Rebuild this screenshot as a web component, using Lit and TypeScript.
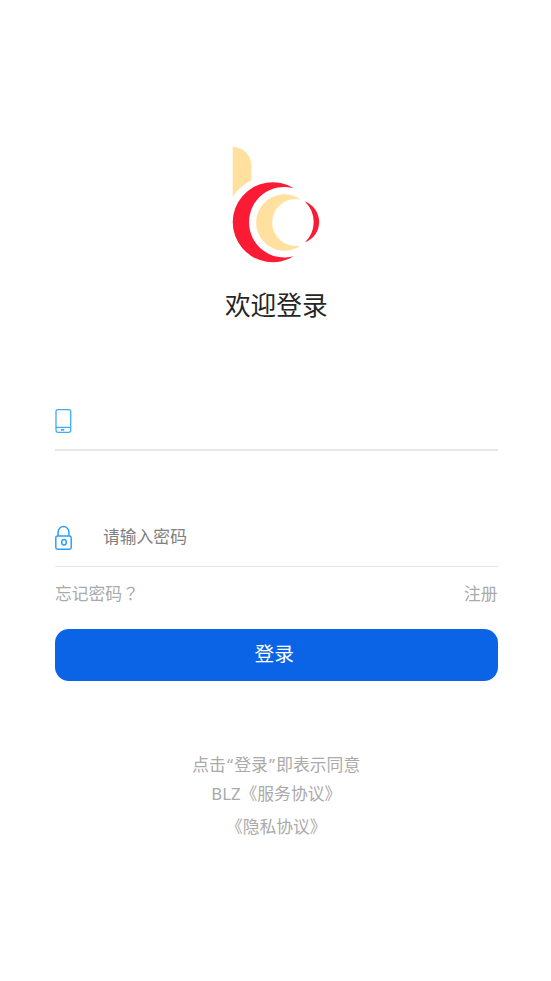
import { LitElement, html, css } from "lit";
import { customElement } from "lit/decorators.js";

@customElement("app-root")
export class AppRoot extends LitElement {
  static styles = css`
    :host {
      display: block;
      box-sizing: border-box;
      width: 100%;
      height: 981px;
      padding: 147px 53.5px 0 55px;
      overflow: hidden;
      background: #fff;
      color: #aaa;
      font: 16.8px/24px "Noto Sans", "Noto Sans CJK SC", sans-serif;
    }
    svg {
      display: block;
      flex: none;
    }
    .logo {
      margin: 0 auto;
    }
    h1 {
      margin: 23px 0 0;
      font-size: 25.7px;
      font-weight: 400;
      line-height: 40px;
      text-align: center;
      color: #262626;
    }
    .field {
      display: flex;
      align-items: center;
      box-sizing: border-box;
      height: 60px;
      border-bottom: 1.5px solid #e4e4e4;
    }
    .field svg {
      margin-top: 2px;
    }
    .phone {
      margin-top: 65px;
      border-bottom: 2px solid #e6e6e6;
    }
    .password {
      margin-top: 56px;
    }
    input {
      flex: 1;
      min-width: 0;
      margin: 0 0 0 31px;
      padding: 0;
      border: 0;
      outline: 0;
      background: none;
      font: inherit;
      color: #333;
    }
    input::placeholder {
      color: #808080;
      opacity: 1;
    }
    .links {
      display: flex;
      justify-content: space-between;
      margin-top: 15px;
    }
    .mark {
      font-family: "Noto Sans CJK TC", sans-serif;
      line-height: 1;
    }
    button {
      display: block;
      width: 100%;
      height: 52.5px;
      margin: 22.5px 0 0;
      padding: 0 4px 2px 0;
      border: 0;
      border-radius: 14px;
      background: #0b64e6;
      color: #fff;
      font: inherit;
      font-size: 19.7px;
    }
    .terms {
      margin-top: 72px;
      text-align: center;
    }
    .terms p {
      margin: 0 0 5px;
    }
    .terms p + p {
      margin-bottom: 9px;
    }
    .quote {
      padding: 0 1.2px;
    }
  `;

  render() {
    return html`
      <svg class="logo" width="88" height="116" viewBox="232 147 88 116">
        <path fill="#ffe09f" d="M232.7 147C243 147 251.4 155 251.4 165.5V180.2C243.5 184 237.5 189.5 232.7 196.7Z" />
        <path fill="#fb1b35" d="M293.8 188.2A40 40 0 1 0 293.8 256.2A35.3 35.3 0 1 1 293.8 188.2Z" />
        <path fill="#ffe09f" d="M300.7 199.5A28.2 28.2 0 1 0 300.7 245.4A23.5 23.5 0 1 1 300.7 199.5Z" />
        <path fill="#fb1b35" d="M304.8 201.6A21.7 21.7 0 0 1 304.8 242.4A27.8 27.8 0 0 0 304.8 201.6Z" />
      </svg>
      <h1>欢迎登录</h1>
      <div class="field phone">
        <svg width="17" height="26" viewBox="0 0 17 26" fill="none" stroke="#42aaf5" stroke-width="1.3">
          <rect x="1" y="1.7" width="14.7" height="22.6" rx="2" />
          <path d="M1 19.4H15.7" />
          <path d="M6 21.8H9.3" stroke-width="1.8" />
        </svg>
        <input type="tel" />
      </div>
      <div class="field password">
        <svg width="17" height="26" viewBox="0 0 17 26" fill="none" stroke="#2f9ff5" stroke-width="1.5">
          <rect x=".8" y="11" width="15.4" height="13.2" rx="1.7" />
          <path d="M3.1 11V7A5.4 5.4 0 0 1 13.9 7V11" />
          <ellipse cx="9" cy="17.3" rx="2.3" ry="2.8" />
        </svg>
        <input type="password" placeholder="请输入密码" />
      </div>
      <div class="links"><span>忘记密码<span class="mark" lang="zh-TW">？</span></span><span>注册</span></div>
      <button>登录</button>
      <div class="terms">
        <p>点击<span class="quote">“</span>登录<span class="quote">”</span>即表示同意</p>
        <p>BLZ《服务协议》</p>
        <p>《隐私协议》</p>
      </div>
    `;
  }
}
